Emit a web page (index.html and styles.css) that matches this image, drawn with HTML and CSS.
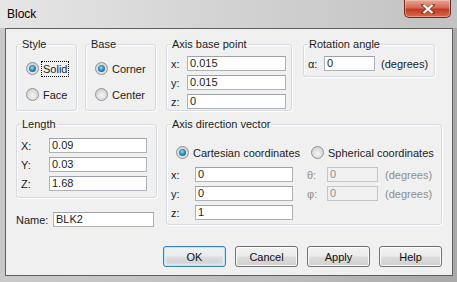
FILE: index.html
```html
<!DOCTYPE html>
<html lang="en">
<head>
  <meta charset="UTF-8" />
  <title>Block</title>
  <link rel="stylesheet" href="styles.css">
</head>
<body>
  <div class="window">
    <div class="titlebar">
      <span class="title">Block</span>
      <span class="close">
        <svg width="14" height="10" viewBox="0 0 14 10">
          <path d="M2 1 L12 9 M12 1 L2 9" stroke="#4b1a10" stroke-width="3.4" stroke-linecap="square" opacity="0.5"/>
          <path d="M2.5 1 L11.5 9 M11.5 1 L2.5 9" stroke="#ffffff" stroke-width="2.2"/>
        </svg>
      </span>
    </div>

    <div class="client">
      <div class="main">
        <div class="top-left">
          <fieldset class="box style-box">
            <legend>Style</legend>
            <div class="radio-list">
              <label class="radio checked"><span class="dot"></span><span class="focus">Solid</span></label>
              <label class="radio"><span class="dot"></span>Face</label>
            </div>
          </fieldset>
          <fieldset class="box base-box">
            <legend>Base</legend>
            <div class="radio-list">
              <label class="radio checked"><span class="dot"></span>Corner</label>
              <label class="radio"><span class="dot"></span>Center</label>
            </div>
          </fieldset>
        </div>

        <div class="top-right">
          <fieldset class="box base-point">
            <legend>Axis base point</legend>
            <div class="rows">
              <div class="row"><span class="lbl w16">x:</span><span class="field w99">0.015</span></div>
              <div class="row"><span class="lbl w16">y:</span><span class="field w99">0.015</span></div>
              <div class="row"><span class="lbl w16">z:</span><span class="field w99">0</span></div>
            </div>
          </fieldset>
          <fieldset class="box rotation">
            <legend>Rotation angle</legend>
            <div class="rows">
              <div class="row"><span class="lbl w16">α:</span><span class="field w51">0</span><span class="unit">(degrees)</span></div>
            </div>
          </fieldset>
        </div>

        <div class="bottom-left">
          <fieldset class="box length">
            <legend>Length</legend>
            <div class="rows">
              <div class="row"><span class="lbl w28">X:</span><span class="field w98">0.09</span></div>
              <div class="row"><span class="lbl w28">Y:</span><span class="field w98">0.03</span></div>
              <div class="row"><span class="lbl w28">Z:</span><span class="field w98">1.68</span></div>
            </div>
          </fieldset>
          <div class="row name-row"><span class="lbl w37">Name:</span><span class="field w101">BLK2</span></div>
        </div>

        <fieldset class="box direction">
          <legend>Axis direction vector</legend>
          <div class="dir-grid">
            <div class="dir-col">
              <label class="radio checked indent"><span class="dot"></span>Cartesian coordinates</label>
              <div class="row"><span class="lbl w24">x:</span><span class="field w98">0</span></div>
              <div class="row"><span class="lbl w24">y:</span><span class="field w98">0</span></div>
              <div class="row"><span class="lbl w24">z:</span><span class="field w98">1</span></div>
            </div>
            <div class="dir-col">
              <label class="radio indent"><span class="dot"></span>Spherical coordinates</label>
              <div class="row off"><span class="lbl w20">θ:</span><span class="field w51">0</span><span class="unit wide">(degrees)</span></div>
              <div class="row off"><span class="lbl w20">φ:</span><span class="field w51">0</span><span class="unit wide">(degrees)</span></div>
            </div>
          </div>
        </fieldset>
      </div>

      <div class="buttons">
        <button class="default">OK</button>
        <button>Cancel</button>
        <button>Apply</button>
        <button>Help</button>
      </div>
    </div>
  </div>
</body>
</html>
```

FILE: styles.css
```css
* {
  box-sizing: border-box;
}

body {
  margin: 0;
  font-family: "Liberation Sans", Arial, sans-serif;
  font-size: 11px;
  color: #1c1c1c;
}

.window {
  width: 457px;
  height: 282px;
  display: flex;
  flex-direction: column;
  padding: 0 4px 6px 5px;
  background: linear-gradient(to right, #c9c9c9, #bdbdbd 60%, #a9a9a9);
}

.titlebar {
  height: 28px;
  display: flex;
  align-items: flex-start;
  justify-content: space-between;
  margin: 0 -4px 0 -5px;
  padding: 0 6px 0 7px;
  background: linear-gradient(to right, #e6e6e6, #d4d4d4 45%, #c2c2c2);
}

.title {
  font-size: 12px;
  line-height: 28px;
  color: #000;
}

.close {
  width: 47px;
  height: 18px;
  display: flex;
  align-items: center;
  justify-content: center;
  border: 1px solid #6b2b20;
  border-top: none;
  border-radius: 0 0 5px 5px;
  background: linear-gradient(to bottom, #e8a898, #d46a55 45%, #c13c23 55%, #d86a48);
  box-shadow: inset 0 0 0 1px rgba(255, 210, 200, 0.45);
}

.client {
  flex: 1;
  border: 1px solid #5f5f5f;
  background: #f0f0f0;
  padding: 9px 9px 0 10px;
  display: flex;
  flex-direction: column;
}

.main {
  display: grid;
  grid-template-columns: 141px 276px;
  column-gap: 9px;
  row-gap: 7px;
}

.top-left, .top-right {
  display: flex;
  align-items: flex-start;
}

.top-left { gap: 8px; }
.top-right { gap: 11px; }

.box {
  margin: 0;
  padding: 0 4px;
  border: 1px solid #d5dbe0;
  border-radius: 3px;
  box-shadow: inset 1px 1px 0 #fff, 1px 1px 0 #fff;
}

.box legend {
  padding: 0 1px;
  line-height: 13px;
  font-weight: normal;
}

.style-box { width: 61px; height: 73px; }
.base-box { width: 71px; height: 73px; }
.base-point { width: 126px; height: 73px; }
.rotation { width: 132px; height: 39px; }
.length { width: 141px; height: 80px; }
.direction { width: 276px; height: 107px; }

.radio-list {
  display: flex;
  flex-direction: column;
  gap: 13px;
  padding: 11px 0 0 5px;
}

.radio {
  display: flex;
  align-items: center;
  gap: 4px;
  height: 13px;
  white-space: nowrap;
}

.dot {
  width: 13px;
  height: 13px;
  flex: none;
  border-radius: 50%;
  border: 1px solid #8f9194;
  background: radial-gradient(circle at 50% 60%, #f4f4f4, #d6d6d6 70%, #c4c4c4);
  position: relative;
}

.checked .dot::after {
  content: "";
  position: absolute;
  left: 2px;
  top: 2px;
  width: 7px;
  height: 7px;
  border-radius: 50%;
  background: radial-gradient(circle at 45% 40%, #9be0f8, #2a8dbd 45%, #0c4a70);
}

.focus {
  outline: 1px dotted #000;
  outline-offset: 1px;
}

.rows {
  display: flex;
  flex-direction: column;
  gap: 4px;
  padding-top: 5px;
}

.length .rows { padding-top: 7px; }

.row {
  display: flex;
  align-items: center;
  height: 15px;
  white-space: nowrap;
}

.lbl { flex: none; }
.w16 { width: 16px; }
.w20 { width: 20px; }
.w24 { width: 24px; }
.w28 { width: 28px; }
.w37 { width: 37px; }

.field {
  height: 15px;
  line-height: 13px;
  padding: 0 2px;
  background: #fff;
  border: 1px solid #aeb2b8;
  border-top-color: #9ea2a8;
  flex: none;
}

.w51 { width: 51px; }
.w98 { width: 98px; }
.w99 { width: 99px; }
.w101 { width: 101px; }

.unit { margin-left: 6px; }
.unit.wide { margin-left: 7px; }

.off { color: #8d8d8d; }
.off .field {
  background: #f0f0f0;
  border-color: #c3c6ca;
}

.bottom-left {
  display: flex;
  flex-direction: column;
}

.name-row {
  margin-top: 14px;
}

.dir-grid {
  display: grid;
  grid-template-columns: 122px 1fr;
  column-gap: 14px;
  padding-top: 14px;
}

.dir-col {
  display: flex;
  flex-direction: column;
  gap: 4px;
}

.dir-col .radio.indent {
  height: 15px;
  padding-left: 5px;
  margin-bottom: 3px;
}

.dir-col:last-child .radio.indent { padding-left: 4px; }

.buttons {
  display: flex;
  justify-content: flex-end;
  gap: 9px;
  margin-top: auto;
  padding: 0 1px 8px 0;
}

button {
  width: 63px;
  height: 21px;
  padding: 0;
  font-family: inherit;
  font-size: 11px;
  color: #111;
  border: 1px solid #707070;
  border-radius: 3px;
  background: linear-gradient(to bottom, #f2f2f2, #ebebeb 48%, #dddddd 52%, #cfcfcf);
  box-shadow: inset 0 0 0 1px #fcfcfc;
}

button.default {
  border-color: #3c7fb1;
  box-shadow: inset 0 0 0 1px #bfe4f6, inset 0 0 2px 2px #dff2fc;
}
```
